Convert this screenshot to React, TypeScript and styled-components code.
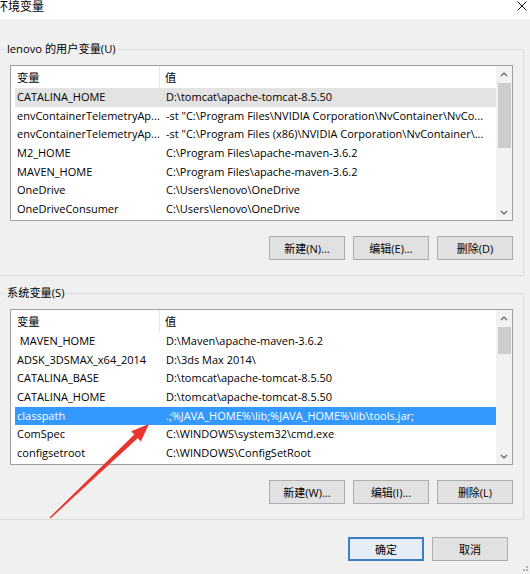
import React from "react";
import styled, { createGlobalStyle } from "styled-components";

const GlobalStyle = createGlobalStyle`
  html, body { margin: 0; padding: 0; background: #f0f0f0; }
  body {
    width: 530px; height: 574px; overflow: hidden;
    font-family: "Open Sans", "Noto Sans CJK SC", sans-serif;
    font-size: 11px; color: #000;
  }
  * { box-sizing: border-box; }
`;

const Window = styled.div`
  position: relative;
  width: 530px;
  height: 574px;
  overflow: hidden;
  background: #f0f0f0;
  display: flex;
  flex-direction: column;
`;

const TitleBar = styled.div`
  height: 19px;
  flex: none;
  background: #fff;
  display: flex;
  align-items: flex-start;
  justify-content: space-between;
`;

const Title = styled.span`
  margin-left: -4px;
  margin-top: -1px;
  font-family: "Noto Sans CJK SC", sans-serif;
  font-size: 12px;
  line-height: 14px;
`;

const CloseIcon = styled.svg`
  width: 10px;
  height: 10px;
  margin: 1px 3px 0 0;
`;

const Group = styled.fieldset<{ $top: number }>`
  margin: ${(p) => p.$top}px 6px 0 -3px;
  padding: 8px 10px 15px 12px;
  border: 1px solid #dcdcdc;
  min-width: 0;
`;

const Legend = styled.legend`
  margin-left: -5px;
  padding: 0 2px;
  line-height: 16px;
  font-size: 11.2px;
`;

const List = styled.div`
  height: 156px;
  border: 1px solid #a0a0a0;
  background: #fff;
  display: flex;
  overflow: hidden;
`;

const ListBody = styled.div`
  flex: 1;
  min-width: 0;
  padding-left: 4px;
  display: flex;
  flex-direction: column;
`;

const HeaderRow = styled.div`
  height: 22px;
  flex: none;
  display: grid;
  grid-template-columns: 145px 1fr;
  align-items: stretch;
`;

const HeaderCell = styled.div<{ $first?: boolean }>`
  padding-left: ${(p) => (p.$first ? 2 : 5)}px;
  line-height: 22px;
  font-family: "Noto Sans CJK SC", sans-serif;
  font-size: 11.3px;
  border-right: ${(p) => (p.$first ? "1px solid #e5e5e5" : "none")};
`;

type Sel = "focus" | "inactive" | undefined;

const Row = styled.div<{ $sel?: Sel }>`
  height: 18.7px;
  flex: none;
  display: grid;
  grid-template-columns: 145px 1fr;
  background: ${(p) =>
    p.$sel === "focus" ? "#3399ff" : p.$sel === "inactive" ? "#e3e3e3" : "transparent"};
  color: ${(p) => (p.$sel === "focus" ? "#fff" : "#000")};
`;

const Cell = styled.div<{ $first?: boolean }>`
  padding-left: ${(p) => (p.$first ? 2 : 6)}px;
  line-height: 18.7px;
  white-space: pre;
  overflow: hidden;
`;

const ScrollBar = styled.div`
  width: 16px;
  flex: none;
  background: #f2f2f2;
  display: flex;
  flex-direction: column;
`;

const ArrowBtn = styled.div`
  height: 16px;
  flex: none;
  display: flex;
  align-items: center;
  justify-content: center;
`;

const Track = styled.div`
  flex: 1;
  display: flex;
  flex-direction: column;
`;

const Thumb = styled.div<{ $h: number }>`
  height: ${(p) => p.$h}px;
  margin: 1px 1px 0 2px;
  background: #cdcdcd;
`;

const ButtonRow = styled.div<{ $top: number; $right?: number }>`
  display: flex;
  justify-content: flex-end;
  gap: 8px;
  margin-top: ${(p) => p.$top}px;
  padding-right: ${(p) => p.$right ?? 0}px;
`;

const Button = styled.button<{ $default?: boolean }>`
  width: 76px;
  height: 24px;
  padding: 0;
  font-family: "Open Sans", "Noto Sans CJK SC", sans-serif;
  font-size: 11px;
  color: #000;
  background: ${(p) => (p.$default ? "#e5eef6" : "#e1e1e1")};
  border: ${(p) => (p.$default ? "2px solid #3b7fc4" : "1px solid #adadad")};
`;

const Overlay = styled.svg`
  position: absolute;
  left: 0;
  top: 0;
  width: 530px;
  height: 574px;
  pointer-events: none;
`;

const Chevron = ({ down }: { down?: boolean }) => (
  <svg width="8" height="5" viewBox="0 0 8 5">
    <path
      d={down ? "M1 1 L4 4 L7 1" : "M1 4 L4 1 L7 4"}
      fill="none"
      stroke="#606060"
      strokeWidth="1.2"
    />
  </svg>
);

type Item = { name: string; value: string; sel?: Sel };

const userVars: Item[] = [
  { name: "CATALINA_HOME", value: "D:\\tomcat\\apache-tomcat-8.5.50", sel: "inactive" },
  { name: "envContainerTelemetryAp...", value: "-st \"C:\\Program Files\\NVIDIA Corporation\\NvContainer\\NvCo..." },
  { name: "envContainerTelemetryAp...", value: "-st \"C:\\Program Files (x86)\\NVIDIA Corporation\\NvContainer\\..." },
  { name: "M2_HOME", value: "C:\\Program Files\\apache-maven-3.6.2" },
  { name: "MAVEN_HOME", value: "C:\\Program Files\\apache-maven-3.6.2" },
  { name: "OneDrive", value: "C:\\Users\\lenovo\\OneDrive" },
  { name: "OneDriveConsumer", value: "C:\\Users\\lenovo\\OneDrive" },
];

const sysVars: Item[] = [
  { name: " MAVEN_HOME", value: "D:\\Maven\\apache-maven-3.6.2" },
  { name: "ADSK_3DSMAX_x64_2014", value: "D:\\3ds Max 2014\\" },
  { name: "CATALINA_BASE", value: "D:\\tomcat\\apache-tomcat-8.5.50" },
  { name: "CATALINA_HOME", value: "D:\\tomcat\\apache-tomcat-8.5.50" },
  { name: "classpath", value: ".;%JAVA_HOME%\\lib;%JAVA_HOME%\\lib\\tools.jar;", sel: "focus" },
  { name: "ComSpec", value: "C:\\WINDOWS\\system32\\cmd.exe" },
  { name: "configsetroot", value: "C:\\WINDOWS\\ConfigSetRoot" },
];

const VarList = ({ items, thumb }: { items: Item[]; thumb: number }) => (
  <List>
    <ListBody>
      <HeaderRow>
        <HeaderCell $first>变量</HeaderCell>
        <HeaderCell>值</HeaderCell>
      </HeaderRow>
      {items.map((it, i) => (
        <Row key={i} $sel={it.sel}>
          <Cell $first>{it.name}</Cell>
          <Cell>{it.value}</Cell>
        </Row>
      ))}
    </ListBody>
    <ScrollBar>
      <ArrowBtn>
        <Chevron />
      </ArrowBtn>
      <Track>
        <Thumb $h={thumb} />
      </Track>
      <ArrowBtn>
        <Chevron down />
      </ArrowBtn>
    </ScrollBar>
  </List>
);

export default function App() {
  return (
    <>
      <GlobalStyle />
      <Window>
        <TitleBar>
          <Title>环境变量</Title>
          <CloseIcon viewBox="0 0 10 10">
            <path d="M0.5 0.5 L9.5 9.5 M9.5 0.5 L0.5 9.5" stroke="#111" strokeWidth="1" />
          </CloseIcon>
        </TitleBar>

        <Group $top={22}>
          <Legend>lenovo 的用户变量(U)</Legend>
          <VarList items={userVars} thumb={65} />
          <ButtonRow $top={15}>
            <Button>新建(N)...</Button>
            <Button>编辑(E)...</Button>
            <Button>删除(D)</Button>
          </ButtonRow>
        </Group>

        <Group $top={9}>
          <Legend>系统变量(S)</Legend>
          <VarList items={sysVars} thumb={27} />
          <ButtonRow $top={15}>
            <Button>新建(W)...</Button>
            <Button>编辑(I)...</Button>
            <Button>删除(L)</Button>
          </ButtonRow>
        </Group>

        <ButtonRow $top={17} $right={22}>
          <Button $default>确定</Button>
          <Button>取消</Button>
        </ButtonRow>

        <Overlay viewBox="0 0 530 574">
          <polygon
            points="49.5,517.5 134.3,434.6 131.2,431.3 149,424 140.8,441.5 137.7,438.2 50.5,518.5"
            fill="#e8352e"
          />
          <g fill="#b5b5b5">
            <rect x="526" y="566" width="2" height="2" />
            <rect x="523" y="569" width="2" height="2" />
            <rect x="526" y="569" width="2" height="2" />
          </g>
        </Overlay>
      </Window>
    </>
  );
}
